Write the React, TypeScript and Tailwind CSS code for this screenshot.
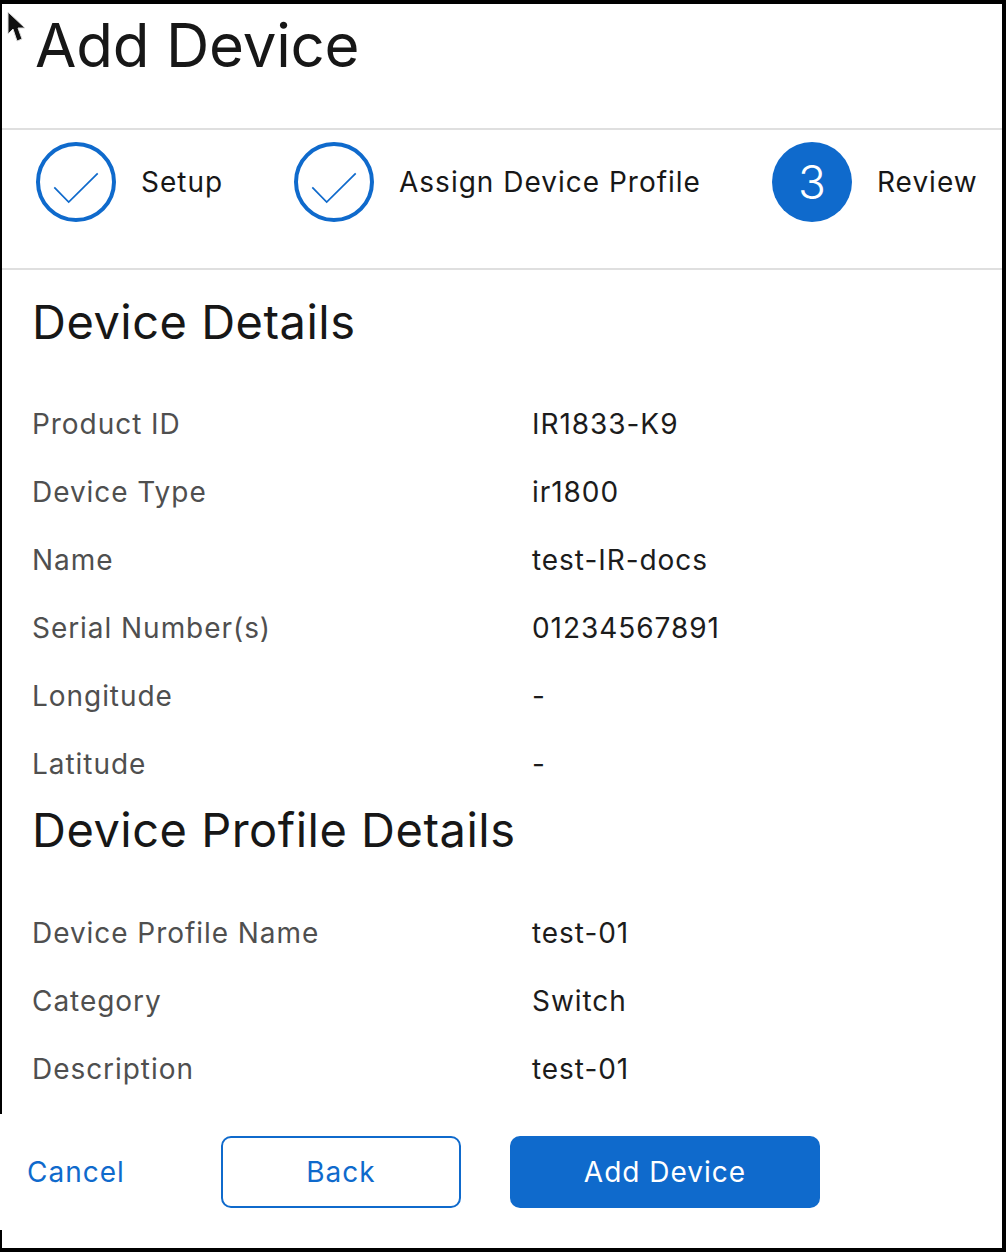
const BLUE = "#0f6acc";

function Check() {
  return (
    <div className="w-20 h-20 rounded-full border-4 border-[#0f6acc] shrink-0 flex items-center justify-center">
      <svg width="80" height="80" viewBox="0 0 80 80" fill="none" className="shrink-0">
        <path d="M18.3 45.3 L32.7 60 L61.7 31.3" stroke={BLUE} strokeWidth="1.7" />
      </svg>
    </div>
  );
}

function Row({ label, value }: { label: string; value: string }) {
  return (
    <div className="grid grid-cols-[500px_1fr] h-[68px] items-center text-[28px] tracking-[0.95px]">
      <div className="text-[#4f4f4f]">{label}</div>
      <div className="text-[#1c1c1c]">{value}</div>
    </div>
  );
}

const deviceRows = [
  ["Product ID", "IR1833-K9"],
  ["Device Type", "ir1800"],
  ["Name", "test-IR-docs"],
  ["Serial Number(s)", "01234567891"],
  ["Longitude", "-"],
  ["Latitude", "-"],
];

const profileRows = [
  ["Device Profile Name", "test-01"],
  ["Category", "Switch"],
  ["Description", "test-01"],
];

export default function App() {
  return (
    <div
      className="relative w-[1006px] h-[1252px] bg-white border-t-4 border-r-4 border-b-4 border-l-2 border-black flex flex-col text-[#171717]"
      style={{ fontFamily: "Inter, 'Liberation Sans', sans-serif" }}
    >
      <svg width="22" height="36" viewBox="0 0 22 36" className="absolute left-[5px] top-[6px]">
        <path d="M1 2 L1 24 L6 19 L10 31 L15 29 L11 18 L18 18 Z" fill="#111" stroke="#ddd" strokeWidth="1" />
      </svg>

      <div className="h-[124px] shrink-0 border-b-2 border-[#dfdfdf] pl-[33px] box-content">
        <h1 className="text-[60px] leading-[82px] font-normal tracking-[-0.2px]">Add Device</h1>
      </div>

      <div className="h-[140px] shrink-0 border-b-2 border-[#dfdfdf] box-border flex items-center pl-[34px] pb-[34px] text-[28px] tracking-[1px]">
        <Check />
        <span className="ml-[25px] w-[153px]">Setup</span>
        <Check />
        <span className="ml-[25px] w-[373px]">Assign Device Profile</span>
        <div className="w-20 h-20 rounded-full bg-[#0f6acc] text-white flex items-center justify-center text-[46px] font-light shrink-0 tracking-normal">3</div>
        <span className="ml-[25px]">Review</span>
      </div>

      <div className="flex-1 pl-[30px] min-h-0">
        <h2 className="text-[47px] leading-[52px] font-normal tracking-[0.5px] mt-[26px] mb-[42px]">Device Details</h2>
        {deviceRows.map(([l, v]) => <Row key={l} label={l} value={v} />)}
        <h2 className="text-[47px] leading-[52px] font-normal tracking-[0.5px] mb-[43px] mt-[6px]">Device Profile Details</h2>
        {profileRows.map(([l, v]) => <Row key={l} label={l} value={v} />)}
      </div>

      <div className="h-[116px] shrink-0 -ml-[2px] bg-white flex items-center text-[28px] tracking-[1px] text-[#0f6acc]">
        <span className="ml-[27px] w-[194px]">Cancel</span>
        <button className="w-[240px] h-[72px] rounded-[10px] border-2 border-[#0f6acc] tracking-[1px]">Back</button>
        <button className="ml-[49px] w-[310px] h-[72px] rounded-[10px] bg-[#0f6acc] text-white tracking-[1px]">Add Device</button>
      </div>
      <div className="h-[18px] shrink-0" />
    </div>
  );
}
